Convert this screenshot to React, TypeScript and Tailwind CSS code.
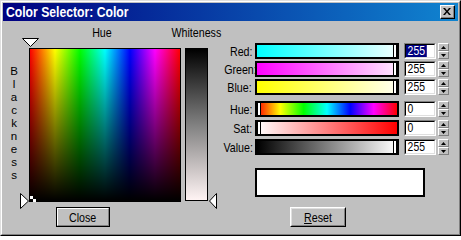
import React from "react";

const FONT = { fontFamily: '"Liberation Sans", Arial, sans-serif' };

// The dialog font is a narrow sans; squeeze Liberation Sans horizontally to get there.
const Narrow = ({ children, origin = "origin-center" }: { children: React.ReactNode; origin?: string }) => (
  <span className={`inline-block scale-x-[0.82] ${origin}`}>{children}</span>
);

type Bar = {
  label: string;
  bg: string;
  marker: "left" | "right";
  value: string;
  selected?: boolean;
};

const RGB: Bar[] = [
  { label: "Red:", bg: "bg-[linear-gradient(to_right,#00ffff,#f0ffff)]", marker: "right", value: "255", selected: true },
  { label: "Green:", bg: "bg-[linear-gradient(to_right,#ff00ff,#ffe8ff)]", marker: "right", value: "255" },
  { label: "Blue:", bg: "bg-[linear-gradient(to_right,#ffff00,#fffff0)]", marker: "right", value: "255" },
];

const HSV: Bar[] = [
  { label: "Hue:", bg: "bg-[linear-gradient(to_right,#ff0000,#ffff00,#00ff00,#00ffff,#0000ff,#ff00ff,#ff0000)]", marker: "left", value: "0" },
  { label: "Sat:", bg: "bg-[linear-gradient(to_right,#ffffff,#ff0000)]", marker: "left", value: "0" },
  { label: "Value:", bg: "bg-[linear-gradient(to_right,#000000,#ffffff)]", marker: "right", value: "255" },
];

const Spinner = () => (
  <div className="flex h-[16px] w-[11px] flex-col">
    <div className="flex h-[8px] items-center justify-center border border-t-white border-l-white border-b-[#808080] border-r-[#808080] bg-[#c0c0c0]">
      <svg width="5" height="3" viewBox="0 0 5 3"><polygon points="2.5,0 5,3 0,3" fill="#000" /></svg>
    </div>
    <div className="flex h-[8px] items-center justify-center border border-t-white border-l-white border-b-[#808080] border-r-[#808080] bg-[#c0c0c0]">
      <svg width="5" height="3" viewBox="0 0 5 3"><polygon points="0,0 5,0 2.5,3" fill="#000" /></svg>
    </div>
  </div>
);

const SliderRow = ({ bar }: { bar: Bar }) => (
  <div className="flex h-[16px] items-center">
    <div className="w-[35px] whitespace-nowrap text-right text-[13px] leading-none text-black">
      <Narrow origin="origin-right">{bar.label}</Narrow>
    </div>
    <div className={`relative ml-[3px] h-[16px] w-[144px] border-2 border-black ${bar.bg}`}>
      <div
        className={`absolute top-0 bottom-0 w-[4px] border-x border-black bg-white ${bar.marker === "left" ? "left-0" : "right-0"}`}
      />
    </div>
    <div className="ml-[5px] h-[16px] w-[32px] border border-t-[#808080] border-l-[#808080] border-b-white border-r-white">
      <div className="flex h-full items-center border border-t-black border-l-black border-b-[#dfdfdf] border-r-[#dfdfdf] bg-white">
        <span
          className={`inline-block origin-left scale-x-[0.8] px-[2px] text-[13px] leading-[12px] ${bar.selected ? "bg-[#000080] text-white" : "text-black"}`}
        >
          {bar.value}
        </span>
      </div>
    </div>
    <div className="ml-[2px]">
      <Spinner />
    </div>
  </div>
);

export default function App() {
  return (
    <div style={FONT} className="h-[236px] w-[461px] border border-t-[#dfdfdf] border-l-[#dfdfdf] border-b-black border-r-black bg-[#c0c0c0]">
      <div className="flex h-full flex-col border border-t-white border-l-white border-b-[#808080] border-r-[#808080] p-px">
        {/* title bar */}
        <div className="flex h-[18px] items-center justify-between bg-[linear-gradient(to_right,#000080,#1084d0)] pl-[3px] pr-[3px]">
          <span className="inline-block origin-left scale-x-[0.87] whitespace-nowrap text-[14px] font-bold leading-none text-white">
            Color Selector: Color
          </span>
          <div className="h-[14px] w-[15px] border border-t-white border-l-white border-b-black border-r-black bg-[#c0c0c0]">
            <div className="flex h-full items-center justify-center border-b border-r border-[#808080]">
              <svg width="8" height="7" viewBox="0 0 8 7">
                <path d="M0 0h2l2 2.5L6 0h2L5 3.5 8 7H6L4 4.5 2 7H0l3-3.5z" fill="#000" />
              </svg>
            </div>
          </div>
        </div>

        {/* body */}
        <div className="relative flex flex-1 text-black">
          <div className="w-[214px]">
            <div className="flex h-[27px] pt-[4px] text-[13px] leading-[15px]">
              <div className="w-[26px]" />
              <div className="w-[152px] pr-[6px] text-center">
                <Narrow>Hue</Narrow>
              </div>
              <div className="ml-[4px] flex w-[23px] justify-center whitespace-nowrap">
                <Narrow>Whiteness</Narrow>
              </div>
            </div>
            <div className="flex h-[154px]">
              <div className="mr-[4px] flex w-[22px] flex-col items-center pt-[17px] text-[11.5px] leading-[13px]">
                {"Blackness".split("").map((ch, i) => (
                  <span key={i} className="block h-[13px]">
                    {ch}
                  </span>
                ))}
              </div>
              <div className="h-[154px] w-[152px] border border-black bg-[linear-gradient(to_bottom,rgba(0,0,0,0),#000),linear-gradient(to_right,#ff0000,#ffff00,#00ff00,#00ffff,#0000ff,#ff00ff,#ff0000)]" />
              <div className="ml-[4px] h-[153px] w-[23px] border border-black bg-[linear-gradient(to_bottom,#000000,#808080,#fff4f4)]" />
            </div>
            <div className="ml-[53px] mt-[5px] h-[20px] w-[54px] border border-black">
              <div className="flex h-full items-center justify-center border border-t-white border-l-white border-b-[#808080] border-r-[#808080] text-[13px] leading-none">
                <Narrow>Close</Narrow>
              </div>
            </div>
          </div>

          <div className="flex flex-col pt-[22px]">
            <div className="flex flex-col gap-[2px]">
              {RGB.map((b) => (
                <SliderRow key={b.label} bar={b} />
              ))}
            </div>
            <div className="mt-[6px] flex flex-col gap-[3px]">
              {HSV.map((b) => (
                <SliderRow key={b.label} bar={b} />
              ))}
            </div>
            <div className="ml-[38px] mt-[13px] h-[29px] w-[170px] border-2 border-black bg-white" />
            <div className="ml-[73px] mt-[10px] h-[20px] w-[56px] border border-t-white border-l-white border-b-black border-r-black">
              <div className="flex h-full items-center justify-center border border-t-[#dfdfdf] border-l-[#dfdfdf] border-b-[#808080] border-r-[#808080] text-[13px] leading-none">
                <Narrow>
                  <span className="underline underline-offset-1">R</span>eset
                </Narrow>
              </div>
            </div>
          </div>

          {/* slider arrows and cursor */}
          <svg className="absolute left-[19px] top-[17px]" width="17" height="9" viewBox="0 0 17 9">
            <polygon points="0.5,0.5 16.5,0.5 8.5,8.5" fill="#fff" stroke="#000" />
          </svg>
          <svg className="absolute left-[17px] top-[172px]" width="9" height="16" viewBox="0 0 9 16">
            <polygon points="0.5,0.5 8.5,8 0.5,15.5" fill="#fff" stroke="#000" />
          </svg>
          <svg className="absolute left-[206px] top-[172px]" width="8" height="16" viewBox="0 0 8 16">
            <polygon points="7.5,0.5 0.5,8 7.5,15.5" fill="#fff" stroke="#000" />
          </svg>
          <div className="absolute left-[27px] top-[175px] h-[3px] w-[3px] bg-white" />
          <div className="absolute left-[30px] top-[178px] h-[3px] w-[3px] bg-white" />
        </div>
      </div>
    </div>
  );
}
